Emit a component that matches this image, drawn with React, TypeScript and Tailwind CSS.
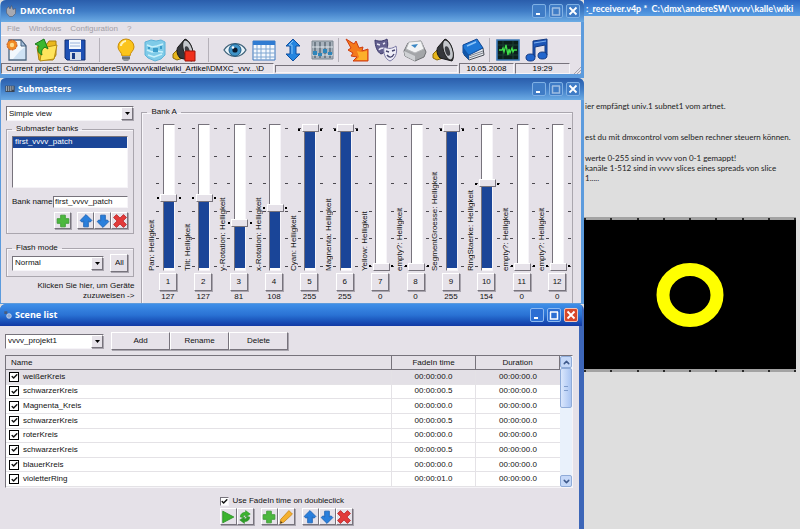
import { useState, type ReactNode } from "react";
import { Check, ChevronDown, ChevronUp } from "lucide-react";
import clsx from "clsx";

const raised =
  "border border-t-white border-l-white border-r-[#77737c] border-b-[#77737c] bg-[#e6e2e9] shadow-[1px_1px_0_#a9a5ae]";
const sunken =
  "border border-t-[#77737c] border-l-[#77737c] border-r-[#f6f4f8] border-b-[#f6f4f8]";

/* ---------- toolbar icons ---------- */

function Icon({ size = 24, children }: { size?: number; children: ReactNode }) {
  return (
    <svg width={size} height={size} viewBox="0 0 24 24" aria-hidden className="shrink-0">
      {children}
    </svg>
  );
}

const NewIcon = () => (
  <Icon>
    <path d="M4 2h12l5 6v14H4z" fill="#f2f8fd" stroke="#48627e" strokeWidth="1.3" />
    <path d="M8 21h12V9l-5 4z" fill="#cfe2f4" />
    <path d="M16 2v6h5z" fill="#a9c3de" stroke="#48627e" />
    <circle cx="7" cy="7" r="5" fill="#f08a24" stroke="#c8531b" strokeDasharray="2 1" />
    <circle cx="7" cy="7" r="2.2" fill="#ffd98a" />
  </Icon>
);

const OpenIcon = () => (
  <Icon>
    <path d="M3 9l4-3h6l2-3h7v14l-3 5H5z" fill="#e9b81e" stroke="#a97f10" />
    <path d="M8 10l15-3-3 14-14 2z" fill="#ffe45c" stroke="#b88c12" />
    <path d="M10 1L1 6l4 2c-2 4-1 7 3 9-1-4 0-6 3-8l3 2z" fill="#3cb72f" stroke="#1b7a1a" />
  </Icon>
);

const SaveIcon = () => (
  <Icon>
    <path d="M2 2h20v20H4l-2-2z" fill="#1e50b4" stroke="#123173" />
    <path d="M6 2h12v9H6z" fill="#f3f7fd" />
    <path d="M7 5h10M7 8h10" stroke="#9ab4dd" />
    <path d="M7 14h11v8H7z" fill="#d5dce8" />
    <path d="M9 15h3v6H9z" fill="#173a86" />
  </Icon>
);

const BulbIcon = () => (
  <Icon>
    <path d="M12 1a8 8 0 0 0-8 8c0 4 4 5 4 9h8c0-4 4-5 4-9a8 8 0 0 0-8-8z" fill="#fbc41c" stroke="#c98d0a" />
    <path d="M7 8c0-3 3-5 5-5" stroke="#fff3b5" strokeWidth="2" fill="none" />
    <path d="M8 18h8v3l-2 2h-4l-2-2z" fill="#8e949c" />
    <path d="M8 20h8" stroke="#4d5257" />
  </Icon>
);

const CubeIcon = () => (
  <Icon>
    <path d="M2 4l6-2 5 1 5-1 4 2v13l-4 4-6 2-7-3-3-3z" fill="#7fcbe8" stroke="#5fb2d8" />
    <path d="M4 7l5 2 5-1 6-2M4 12l5 2 4-1 7 1M5 17l6 2 8-3" stroke="#c9f1fb" strokeWidth="1.6" fill="none" />
    <path d="M10 10h5v4h-5zM5 9h2v2H5zM17 8h2v3h-2z" fill="#3a9cc9" />
  </Icon>
);

const SpeakerShape = () => (
  <>
    <path d="M5 12l-4 4v4l4 2 6-2z" fill="#e7b51b" stroke="#8a6a0b" />
    <path d="M13 1L6 9c-2 3-1 8 2 11l12 3c3-3 0-20-7-22z" fill="#35373b" stroke="#17181a" />
    <ellipse cx="16" cy="12" rx="4.5" ry="10.5" transform="rotate(-18 16 12)" fill="#c4c7cc" stroke="#222" />
    <ellipse cx="15.5" cy="13" rx="2.2" ry="5" transform="rotate(-18 15.5 13)" fill="#3c3e43" />
  </>
);

const SpeakerIcon = () => (
  <Icon>
    <SpeakerShape />
  </Icon>
);

const SpeakerStopIcon = () => (
  <Icon>
    <SpeakerShape />
    <path d="M13 13h10v10H13z" fill="#f0301c" stroke="#9d1408" />
  </Icon>
);

const EyeIcon = () => (
  <Icon>
    <path d="M1 12c5-8 17-9 22 0-5 9-17 8-22 0z" fill="#e9f4fa" stroke="#3f6279" strokeWidth="1.3" />
    <circle cx="12" cy="12" r="6" fill="#3f93c7" stroke="#1f5c86" />
    <circle cx="12" cy="12" r="2.6" fill="#0b1a2c" />
    <circle cx="10" cy="9.5" r="1.3" fill="#fff" />
  </Icon>
);

const CalendarIcon = () => (
  <Icon>
    <path d="M1 3h22v19H1z" fill="#f4f8fd" stroke="#3a77bd" />
    <path d="M1 3h22v4H1z" fill="#2f7bd2" />
    <path d="M1 11h22M1 15h22M1 19h22M5 7v15M9 7v15M14 7v15M18 7v15" stroke="#7fa6d2" />
  </Icon>
);

const UpDownIcon = () => (
  <Icon>
    <path d="M12 1l7 7h-4v8h4l-7 7-7-7h4V8H5z" fill="#2485e0" stroke="#0f4fa0" />
    <path d="M12 3l-4 4h3v9" stroke="#86c4f7" fill="none" />
  </Icon>
);

const MixerIcon = () => (
  <Icon>
    <path d="M2 3h21v18H2z" fill="#a9b3bd" stroke="#7d8790" />
    <path d="M5 4v16M10 4v16M15 4v16M20 4v16" stroke="#5a6772" strokeWidth="1.4" />
    <path d="M2 9h21M2 17h21" stroke="#dfe5ea" />
    <path d="M3 13h4v4H3zM8 15h4v3H8zM13 11h4v4h-4zM18 14h4v3h-4z" fill="#2e86bb" />
  </Icon>
);

const LightningIcon = () => (
  <Icon>
    <path d="M1 1l8 5 2-3 3 7 4-1-1 4 6-2v12H8l4-4-6-1 2-3-5-3 3-2z" fill="#f47a1c" stroke="#cf3d10" />
    <path d="M12 13l4 1 6-1v9H11l3-3z" fill="#fcb02a" />
  </Icon>
);

const MasksIcon = () => (
  <Icon>
    <path d="M1 2c4 2 9 1 12-1 2 7 0 13-6 15C3 14 1 8 1 2z" fill="#64608f" stroke="#3c396b" />
    <path d="M3 6l3 1M9 6l2-1M5 12c1-2 3-2 5-2" stroke="#e9e8f5" strokeWidth="1.4" fill="none" />
    <path d="M10 9c4 2 8 2 12-1 2 7-1 13-6 15-5-2-7-8-6-14z" fill="#eeedf7" stroke="#7a78a4" />
    <path d="M12 13l3 1M18 13l3-1M13 17c2 3 5 3 7-1" stroke="#47456f" strokeWidth="1.4" fill="none" />
  </Icon>
);

const KeyIcon = () => (
  <Icon>
    <path d="M5 5l13-2 5 11-2 5-9 4-10-5-1-5z" fill="#a3a5a8" stroke="#6e7073" />
    <path d="M6 4l12-1 3 8-9 4-9-4z" fill="#f2f3f4" stroke="#b4b6b9" />
    <path d="M1 13l11 5v5L2 18z" fill="#cfd1d4" />
    <path d="M8 7l7-1-3 4z" fill="#3b87c4" />
  </Icon>
);

const BookIcon = () => (
  <Icon>
    <path d="M8 14l14-4 1 7-15 5-5-5z" fill="#e8ebf0" stroke="#4a4e57" />
    <path d="M8 18l14-5M8 20l14-5" stroke="#7d828c" />
    <path d="M2 7l14-6 6 9-14 7-6-2z" fill="#1f78d6" stroke="#0d4695" />
    <path d="M6 8l9-4" stroke="#8fc6fa" strokeWidth="1.5" />
    <path d="M2 9v7l6 6v-5z" fill="#1256a8" />
  </Icon>
);

const WaveIcon = () => (
  <Icon>
    <path d="M1 2h22v20H1z" fill="#0c1f1b" stroke="#3c7ab8" strokeWidth="1.6" />
    <path d="M2 7h20M2 17h20M7 3v18M17 3v18" stroke="#1b4034" />
    <path d="M3 12h3l1-2 1 4 2-7 2 10 1-6 1 4 2-5 1 4 1-2h3" stroke="#3fe04a" strokeWidth="1.3" fill="none" />
  </Icon>
);

const NotesIcon = () => (
  <Icon>
    <path d="M8 3l14-2v16h-2V7l-10 2v10H8z" fill="#1d57b8" stroke="#123a83" />
    <ellipse cx="5.5" cy="19.5" rx="4.5" ry="3.5" fill="#2166cd" stroke="#123a83" />
    <ellipse cx="17.5" cy="17.5" rx="4.5" ry="3.5" fill="#2166cd" stroke="#123a83" />
    <path d="M9 5l12-2" stroke="#7fb2f0" />
  </Icon>
);

/* ---------- small action icons ---------- */

const PlusIcon = () => (
  <Icon size={14}>
    <path d="M8 2h8v6h6v8h-6v6H8v-6H2V8h6z" fill="#4db83f" stroke="#3b9a33" strokeWidth="1.5" />
  </Icon>
);
const ArrowUpIcon = () => (
  <Icon size={14}>
    <path d="M12 1l10 10-3 3-3-2v10H8V12l-3 2-3-3z" fill="#2a7fdc" stroke="#1d62b4" strokeWidth="1.5" />
  </Icon>
);
const ArrowDownIcon = () => (
  <Icon size={14}>
    <path d="M12 23l10-10-3-3-3 2V2H8v10l-3-2-3 3z" fill="#2a7fdc" stroke="#1d62b4" strokeWidth="1.5" />
  </Icon>
);
const CrossIcon = () => (
  <Icon size={14}>
    <path d="M6 1l6 6 6-6 5 5-6 6 6 6-5 5-6-6-6 6-5-5 6-6-6-6z" fill="#e23a3a" stroke="#b92a2e" strokeWidth="1.5" />
  </Icon>
);
const PlayIcon = () => (
  <Icon size={14}>
    <path d="M3 2l19 10L3 22z" fill="#3bb32e" stroke="#2b9226" strokeWidth="1.5" />
  </Icon>
);
const CycleIcon = () => (
  <Icon size={14}>
    <path d="M4 12c0-6 5-8 9-8V1l8 6-8 5V9c-3 0-4 1-4 4z" fill="#3bb32e" stroke="#2b9226" />
    <path d="M20 12c0 6-5 8-9 8v3l-8-6 8-5v3c3 0 4-1 4-4z" fill="#2f9d28" stroke="#2b9226" />
  </Icon>
);
const PencilIcon = () => (
  <Icon size={14}>
    <path d="M17 1l6 6L8 21l-6 2 1-7z" fill="#f5b02e" stroke="#c98a20" strokeWidth="1.5" />
    <path d="M2 23l1-4 3 3z" fill="#4d3a18" />
  </Icon>
);

/* ---------- building blocks ---------- */

function CaptionButton({ kind, active }: { kind: "min" | "max" | "close"; active?: boolean }) {
  return (
    <button
      aria-label={kind}
      className={clsx(
        "grid size-[14px] place-items-center rounded-xs border",
        active && kind === "close"
          ? "border-[#f3c3b5] bg-[#d8482a]"
          : active
            ? "border-[#8db9f0] bg-[#2c6fd3]"
            : "border-[#7fb0e4] bg-[#3f7cc6]",
      )}
    >
      <svg width="10" height="10" viewBox="0 0 10 10" fill="none" stroke="white">
        {kind === "min" && <path d="M2 8h4" strokeWidth="2" />}
        {kind === "max" && (
          <path d="M1 2h8M1.5 2v7h7V2" strokeWidth="1.5" opacity={active ? 1 : 0.5} />
        )}
        {kind === "close" && <path d="M1.5 1.5l7 7M8.5 1.5l-7 7" strokeWidth="1.8" />}
      </svg>
    </button>
  );
}

function Window({
  title,
  icon,
  active,
  className,
  children,
}: {
  title: string;
  icon: ReactNode;
  active?: boolean;
  className?: string;
  children: ReactNode;
}) {
  return (
    <section
      className={clsx(
        "flex flex-col overflow-hidden rounded-t-md",
        active ? "bg-[#3d66b8] pr-[5px]" : "bg-[#5c9bdd] pr-[3px] pl-px",
        className,
      )}
    >
      <header
        className={clsx(
          "-mr-[3px] flex h-[22px] shrink-0 items-center gap-[3px] pr-1 pl-1",
          active
            ? "bg-linear-to-b from-[#3f8fe8] via-[#2a72d4] to-[#1238a4]"
            : "bg-linear-to-b from-[#2a5dab] via-[#3f7cc6] to-[#6cabe4]",
        )}
      >
        {icon}
        <h1 className="flex-1 font-['Open_Sans'] text-[9px] font-bold text-white">{title}</h1>
        <div className="flex gap-[3px]">
          <CaptionButton kind="min" active={active} />
          <CaptionButton kind="max" active={active} />
          <CaptionButton kind="close" active={active} />
        </div>
      </header>
      <div className="flex-1 bg-[#e5e1e8]">{children}</div>
    </section>
  );
}

function Dropdown({ label, value, className }: { label: string; value: string; className?: string }) {
  return (
    <div className={clsx("grid h-[15px] grid-cols-[1fr_12px] bg-white", sunken, className)}>
      <select
        aria-label={label}
        className="col-span-2 col-start-1 row-start-1 appearance-none bg-transparent pl-0.5 outline-none"
      >
        <option>{value}</option>
      </select>
      <span
        className={clsx(
          "pointer-events-none col-start-2 row-start-1 grid place-items-center",
          raised,
        )}
      >
        <svg width="5" height="3" viewBox="0 0 5 3" aria-hidden>
          <path d="M0 0h5L2.5 3z" />
        </svg>
      </span>
    </div>
  );
}

function ToolButton({ label, children }: { label: string; children: ReactNode }) {
  return (
    <button aria-label={label} className={clsx("grid size-[17px] place-items-center", raised)}>
      {children}
    </button>
  );
}

function CheckBox({ label, hideLabel, thick }: { label: string; hideLabel?: boolean; thick?: boolean }) {
  return (
    <label className="flex items-center gap-1 whitespace-nowrap">
      <span className="grid">
        <input
          type="checkbox"
          defaultChecked
          aria-label={hideLabel ? label : undefined}
          className={clsx(
            "peer col-start-1 row-start-1 appearance-none bg-white",
            thick ? "size-[10px] border border-black outline outline-black/60 -outline-offset-1" : clsx("size-[9px]", sunken),
          )}
        />
        <Check
          size={7}
          strokeWidth={5}
          className="pointer-events-none invisible col-start-1 row-start-1 place-self-center peer-checked:visible"
        />
      </span>
      {!hideLabel && label}
    </label>
  );
}

/* ---------- DMXControl main window ---------- */

const toolbar: { name: string; icon: ReactNode }[][] = [
  [
    { name: "New", icon: <NewIcon /> },
    { name: "Open", icon: <OpenIcon /> },
    { name: "Save", icon: <SaveIcon /> },
  ],
  [
    { name: "Light", icon: <BulbIcon /> },
    { name: "Stage", icon: <CubeIcon /> },
    { name: "Stop sound", icon: <SpeakerStopIcon /> },
  ],
  [
    { name: "View", icon: <EyeIcon /> },
    { name: "Calendar", icon: <CalendarIcon /> },
    { name: "Submasters", icon: <UpDownIcon /> },
    { name: "Mixer", icon: <MixerIcon /> },
  ],
  [
    { name: "Effects", icon: <LightningIcon /> },
    { name: "Scenes", icon: <MasksIcon /> },
    { name: "Keyboard", icon: <KeyIcon /> },
    { name: "Audio", icon: <SpeakerIcon /> },
    { name: "Help", icon: <BookIcon /> },
  ],
  [
    { name: "Oscilloscope", icon: <WaveIcon /> },
    { name: "Music", icon: <NotesIcon /> },
  ],
];

function MainWindow() {
  return (
    <Window
      title="DMXControl"
      className="pb-1"
      icon={
        <Icon size={12}>
          <path d="M3 8l4-5 3 5 3-7 3 8 5-2v10l-6 6H9l-6-7z" fill="#a7a9b2" stroke="#4c4f5c" />
        </Icon>
      }
    >
      <nav className="flex h-[13px] items-center gap-[9px] px-1.5 text-[#a19da5]">
        <button>File</button>
        <button>Windows</button>
        <button>Configuration</button>
        <button>?</button>
      </nav>
      <div className="flex h-7 items-center border-t border-white px-px">
        {toolbar.map((group, i) => (
          <div key={i} className="flex items-center">
            {i > 0 && (
              <span
                className={clsx(
                  "h-6 w-px bg-[#b5b1b9]",
                  i < 3 ? "mr-[11px] ml-[10px]" : "mr-[3px] ml-[2px]",
                )}
              />
            )}
            {group.map((tool) => (
              <button key={tool.name} aria-label={tool.name} className="grid w-[29px] place-items-center">
                {tool.icon}
              </button>
            ))}
          </div>
        ))}
      </div>
      <footer className="flex h-[11px] items-center gap-px text-black">
        <span className={clsx("h-full w-[47%] overflow-hidden pl-1 leading-[10px] whitespace-nowrap", sunken)}>
          Current project: C:\dmx\andereSW\vvvv\kalle\wiki_Artikel\DMXC_vvv...\D
        </span>
        <span className={clsx("h-2 flex-1", sunken)} />
        <span className={clsx("h-full w-[55px] text-center leading-[10px]", sunken)}>10.05.2008</span>
        <span className={clsx("h-full w-[55px] text-center leading-[10px]", sunken)}>19:29</span>
        <svg width="10" height="10" viewBox="0 0 10 10" className="text-[#a5a1aa]" aria-hidden>
          <path d="M10 3l-7 7M10 6l-4 4M10 9l-1 1" stroke="currentColor" />
        </svg>
      </footer>
    </Window>
  );
}

/* ---------- Submasters ---------- */

const channels = [
  { name: "Pan: Helligkeit", level: 127 },
  { name: "Tilt: Helligkeit", level: 127 },
  { name: "y-Rotation: Helligkeit", level: 81 },
  { name: "x-Rotation: Helligkeit", level: 108 },
  { name: "Cyan: Helligkeit", level: 255 },
  { name: "Magnenta: Helligkeit", level: 255 },
  { name: "Yellow: Helligkeit", level: 0 },
  { name: "empty?: Helligkeit", level: 0 },
  { name: "SegmentGroesse: Helligkeit", level: 255 },
  { name: "RingStaerke: Helligkeit", level: 154 },
  { name: "empty?: Helligkeit", level: 0 },
  { name: "empty?: Helligkeit", level: 0 },
];

function Ticks({ level }: { level: number }) {
  return (
    <div className="relative my-1 flex w-[3px] flex-col items-center justify-between">
      {[0, 1, 2, 3, 4, 5].map((n) => (
        <span key={n} className="h-px w-full bg-[#4b484f] last:h-0.5 last:w-0.5 last:bg-black" />
      ))}
      {/* marker that travels with the thumb */}
      <span
        className="absolute size-0.5 bg-black"
        style={{ bottom: `${(level / 255) * 98}%` }}
      />
    </div>
  );
}

function Fader({ index, name, initial }: { index: number; name: string; initial: number }) {
  const [level, setLevel] = useState(initial);
  const id = `fader-${index}`;
  return (
    <div className="flex flex-col">
      <div className="flex h-[147px]">
        <label
          htmlFor={id}
          className="w-[9px] rotate-180 overflow-visible text-left leading-[9px] whitespace-nowrap [writing-mode:vertical-rl]"
        >
          {name}
        </label>
        <Ticks level={level} />
        <div className="grid w-[19px] justify-items-center">
          <div className={clsx("col-start-1 row-start-1 flex w-3 flex-col justify-end bg-white pb-0.5", sunken)}>
            <div className="w-full bg-[#1a4598]" style={{ height: `${(level / 255) * 97}%` }} />
          </div>
          <input
            id={id}
            type="range"
            min={0}
            max={255}
            value={level}
            onChange={(e) => setLevel(Number(e.target.value))}
            className="col-start-1 row-start-1 h-[147px] w-[17px] appearance-none bg-transparent [direction:rtl] [writing-mode:vertical-lr] [&::-webkit-slider-thumb]:h-2 [&::-webkit-slider-thumb]:w-[17px] [&::-webkit-slider-thumb]:appearance-none [&::-webkit-slider-thumb]:border [&::-webkit-slider-thumb]:border-t-white [&::-webkit-slider-thumb]:border-r-[#77737c] [&::-webkit-slider-thumb]:border-b-[#77737c] [&::-webkit-slider-thumb]:border-l-white [&::-webkit-slider-thumb]:bg-[#e6e2e9]"
          />
        </div>
        <Ticks level={level} />
      </div>
      <div className="mt-0.5 ml-[12px] flex w-[17px] flex-col items-center self-start">
        <button className={clsx("h-[18px] w-[18px]", raised)}>{index}</button>
        <output htmlFor={id} className="mt-px leading-[10px]">
          {level}
        </output>
      </div>
    </div>
  );
}

const group = "min-w-0 border border-[#aaa6ae] shadow-[inset_1px_1px_0_#f8f6fa]";

function SubmastersWindow() {
  return (
    <Window
      title="Submasters"
      className="h-[226px] pb-px"
      icon={
        <Icon size={10}>
          <path d="M1 4h22v15H1z" fill="#3b4553" />
          <path d="M4 5v12M9 5v12M14 5v12M19 5v9" stroke="#c6d2df" strokeWidth="2" />
        </Icon>
      }
    >
      <div className="flex h-full">
        <div className="flex w-[23%] shrink-0 flex-col pt-1.5 pl-[5px]">
          <Dropdown label="View" value="Simple view" />
          <fieldset className={clsx("mt-0.5 px-[5px] pt-px pb-1", group)}>
            <legend className="px-1 leading-[12px]">Submaster banks</legend>
            <select
              size={4}
              aria-label="Submaster banks"
              defaultValue="first_vvvv_patch"
              className={clsx("block h-[52px] w-full overflow-hidden bg-white outline-none", sunken)}
            >
              <option className="h-[11px] min-h-0 p-0 px-0.5 leading-[10px] checked:bg-[#1a4598] checked:bg-[linear-gradient(#1a4598,#1a4598)] checked:text-white">
                first_vvvv_patch
              </option>
            </select>
            <div className="mt-2 flex items-center">
              <label htmlFor="bank" className="w-[41px] whitespace-nowrap">
                Bank name:
              </label>
              <input
                id="bank"
                defaultValue="first_vvvv_patch"
                className={clsx("h-3 min-w-0 flex-1 bg-white pl-px outline-none", sunken)}
              />
            </div>
            <div className="mt-1 flex justify-end">
              <ToolButton label="Add bank"><PlusIcon /></ToolButton>
              <div className="ml-1.5 flex">
                <ToolButton label="Move bank up"><ArrowUpIcon /></ToolButton>
                <ToolButton label="Move bank down"><ArrowDownIcon /></ToolButton>
                <ToolButton label="Delete bank"><CrossIcon /></ToolButton>
              </div>
            </div>
          </fieldset>
          <fieldset className={clsx("mt-2 px-[5px] pb-1", group)}>
            <legend className="px-1 leading-[12px]">Flash mode</legend>
            <div className="flex items-center gap-1.5">
              <Dropdown label="Flash mode" value="Normal" className="flex-1" />
              <button className={clsx("size-[18px]", raised)}>All</button>
            </div>
          </fieldset>
          <button className="mt-1 self-end text-right leading-[10px] whitespace-nowrap">
            Klicken Sie hier, um Geräte
            <br />
            zuzuweisen -&gt;
          </button>
        </div>
        <fieldset className={clsx("mt-1.5 mr-2 ml-[7px] flex-1 border-b-0 pl-[5px]", group)}>
          <legend className="px-1 leading-[12px]">Bank A</legend>
          <div className="grid grid-cols-12 pt-1.5">
            {channels.map((channel, i) => (
              <Fader key={i} index={i + 1} name={channel.name} initial={channel.level} />
            ))}
          </div>
        </fieldset>
      </div>
    </Window>
  );
}

/* ---------- Scene list ---------- */

const scenes = [
  { name: "weißerKreis", fadeIn: "00:00:00.0", duration: "00:00:00.0" },
  { name: "schwarzerKreis", fadeIn: "00:00:00.5", duration: "00:00:00.0" },
  { name: "Magnenta_Kreis", fadeIn: "00:00:00.0", duration: "00:00:00.0" },
  { name: "schwarzerKreis", fadeIn: "00:00:00.5", duration: "00:00:00.0" },
  { name: "roterKreis", fadeIn: "00:00:00.0", duration: "00:00:00.0" },
  { name: "schwarzerKreis", fadeIn: "00:00:00.5", duration: "00:00:00.0" },
  { name: "blauerKreis", fadeIn: "00:00:00.0", duration: "00:00:00.0" },
  { name: "violetterRing", fadeIn: "00:00:01.0", duration: "00:00:00.0" },
];

function SceneTable() {
  const head = "h-[14px] border-r border-b border-[#77737c] bg-[#e5e1e8] font-normal";
  return (
    <div className={clsx("flex h-[133px] bg-white", sunken)}>
      <table className="h-full flex-1 table-fixed border-separate border-spacing-0">
        <thead>
          <tr>
            <th className={clsx("pl-[5px] text-left", head)}>Name</th>
            <th className={clsx("w-[84px]", head)}>FadeIn time</th>
            <th className={clsx("w-[84px]", head)}>Duration</th>
          </tr>
        </thead>
        <tbody>
          {scenes.map((scene, i) => (
            <tr key={i} className="first:bg-[#e3e0e6]">
              <td className="border-r border-b border-[#e4e2e6] pl-[3px]">
                <div className="flex items-center gap-1">
                  <CheckBox label={scene.name} thick hideLabel />
                  {scene.name}
                </div>
              </td>
              <td className="border-r border-b border-[#e4e2e6] text-center">{scene.fadeIn}</td>
              <td className="border-b border-[#e4e2e6] text-center">{scene.duration}</td>
            </tr>
          ))}
        </tbody>
      </table>
      <div className="flex w-3 flex-col bg-[#e9f1fb]">
        <button aria-label="Scroll up" className="grid h-3 place-items-center rounded-xs border border-[#8fabd8] bg-[#c5d8f8]">
          <ChevronUp size={9} strokeWidth={4} className="text-[#3f5a8c]" />
        </button>
        <div className="grid h-10 place-items-center rounded-xs border border-[#8fabd8] bg-linear-to-r from-[#dbe7fc] to-[#a9c4f2]">
          <span className="h-[5px] w-1 border-y border-[#7f9ccc]" />
        </div>
        <button aria-label="Scroll down" className="mt-auto grid h-3 place-items-center rounded-xs border border-[#8fabd8] bg-[#c5d8f8]">
          <ChevronDown size={9} strokeWidth={4} className="text-[#3f5a8c]" />
        </button>
      </div>
    </div>
  );
}

function SceneListWindow() {
  return (
    <Window
      title="Scene list"
      active
      className="flex-1"
      icon={
        <Icon size={8}>
          <path d="M1 1h9v8H1z" fill="#4a5c7c" />
          <circle cx="15" cy="15" r="7" fill="#8fa8d0" stroke="#dfe9f8" strokeWidth="2" />
        </Icon>
      }
    >
      <div className="flex flex-col pt-1.5 pr-1.5 pl-[5px]">
        <div className="flex items-center gap-[7px]">
          <Dropdown label="Scene list" value="vvvv_projekt1" className="w-[99px]" />
          <div className="flex">
            {["Add", "Rename", "Delete"].map((action) => (
              <button key={action} className={clsx("h-[18px] w-[59px]", raised)}>
                {action}
              </button>
            ))}
          </div>
        </div>
        <div className="mt-[5px]">
          <SceneTable />
        </div>
        <div className="mt-[7px] flex flex-col self-center pr-1.5">
          <CheckBox label="Use FadeIn time on doubleclick" />
          <div className="mt-px flex gap-[7px]">
            <div className="flex">
              <ToolButton label="Play"><PlayIcon /></ToolButton>
              <ToolButton label="Cycle"><CycleIcon /></ToolButton>
            </div>
            <div className="flex">
              <ToolButton label="Add scene"><PlusIcon /></ToolButton>
              <ToolButton label="Edit scene"><PencilIcon /></ToolButton>
            </div>
            <div className="flex">
              <ToolButton label="Move scene up"><ArrowUpIcon /></ToolButton>
              <ToolButton label="Move scene down"><ArrowDownIcon /></ToolButton>
              <ToolButton label="Delete scene"><CrossIcon /></ToolButton>
            </div>
          </div>
        </div>
      </div>
    </Window>
  );
}

/* ---------- patch editor in the background ---------- */

function Handles() {
  return (
    <div className="flex h-[3px] items-center justify-between bg-[#a3a3a3]">
      {Array.from({ length: 9 }, (_, i) => (
        <span key={i} className="size-0.5 bg-[#2a2a2a]" />
      ))}
    </div>
  );
}

function PatchEditor() {
  return (
    <main className="flex min-w-0 flex-1 flex-col overflow-hidden bg-[#dedede] font-['Lato'] text-[8px] leading-[10px] whitespace-nowrap text-[#1c1c1c]">
      <header className="h-4 bg-linear-to-b from-[#2a66c4] to-[#5a9fe4] pl-0.5 text-[9px] leading-[18px] font-bold whitespace-pre text-white">
        {":_receiver.v4p *  C:\\dmx\\andereSW\\vvvv\\kalle\\wiki"}
      </header>
      <div className="flex h-[201px] flex-col pt-[85px] pl-px">
        <p>ier empfängt univ.1 subnet1 vom artnet.</p>
        <p className="mt-[21px]">est du mit dmxcontrol vom selben rechner steuern können.</p>
        <p className="mt-[11px]">werte 0-255 sind in vvvv von 0-1 gemappt!</p>
        <p>kanäle 1-512 sind in vvvv slices eines spreads von slice</p>
        <p>1.....</p>
      </div>
      <div className="mr-1">
        <Handles />
        <div className="grid h-[149px] place-items-center bg-black">
          <svg width="68" height="64" viewBox="0 0 68 64" aria-hidden>
            <ellipse cx="34" cy="32" rx="27" ry="25.5" fill="none" stroke="#ffff00" strokeWidth="13" />
          </svg>
        </div>
        <Handles />
      </div>
    </main>
  );
}

export default function App() {
  return (
    <div className="flex min-h-screen bg-[#dedede] font-['Liberation_Sans',sans-serif] text-[8px] leading-[12px] text-[#111]">
      <div className="flex w-[73%] shrink-0 flex-col">
        <MainWindow />
        <SubmastersWindow />
        <SceneListWindow />
      </div>
      <PatchEditor />
    </div>
  );
}
